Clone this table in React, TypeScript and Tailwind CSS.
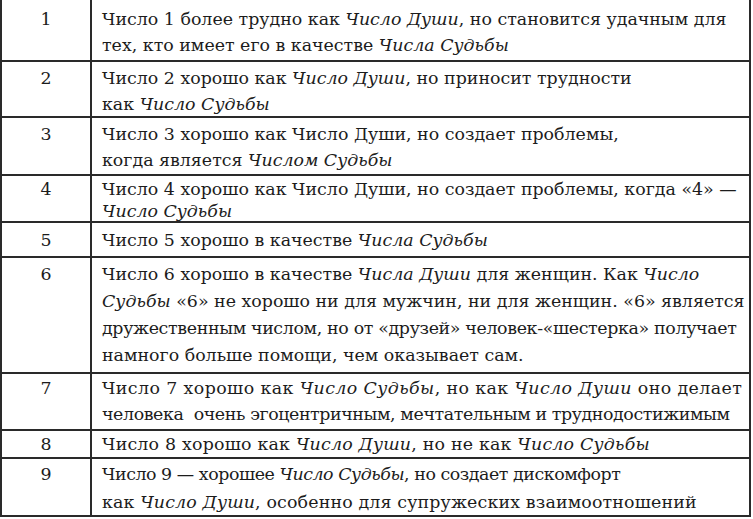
import React from "react";

type Row = { n: string; row: string; cell: string; lines: { c?: string; t: React.ReactNode }[] };

const I = ({ children }: { children: React.ReactNode }) => <i>{children}</i>;

const rows: Row[] = [
  { n: "1", row: "h-[62px]", cell: "pt-[6px] leading-[26px]", lines: [
    { t: <>Число 1 более трудно как <I>Число Души</I>, но становится удачным для</> },
    { t: <>тех, кто имеет его в качестве <I>Числа Судьбы</I></> },
  ] },
  { n: "2", row: "h-[56px]", cell: "pt-[3px] leading-[26px]", lines: [
    { t: <>Число 2 хорошо как <I>Число Души</I>, но приносит трудности</> },
    { t: <>как <I>Число Судьбы</I></> },
  ] },
  { n: "3", row: "h-[58px]", cell: "pt-[3px] leading-[26px]", lines: [
    { t: <>Число 3 хорошо как Число Души, но создает проблемы,</> },
    { t: <>когда является <I>Числом Судьбы</I></> },
  ] },
  { n: "4", row: "h-[47px]", cell: "pt-[2px] leading-[22px]", lines: [
    { t: <>Число 4 хорошо как Число Души, но создает проблемы, когда «4» —</> },
    { t: <><I>Число Судьбы</I></> },
  ] },
  { n: "5", row: "h-[35px]", cell: "pt-[4px] leading-[26px]", lines: [
    { t: <>Число 5 хорошо в качестве <I>Числа Судьбы</I></> },
  ] },
  { n: "6", row: "h-[116px]", cell: "pt-[3px] leading-[27px]", lines: [
    { t: <>Число 6 хорошо в качестве <I>Числа Души</I> для женщин. Как <I>Число</I></> },
    { t: <><I>Судьбы</I> «6» не хорошо ни для мужчин, ни для женщин. «6» является</> },
    { c: "tracking-[-0.35px]", t: <>дружественным числом, но от «друзей» человек-«шестерка» получает</> },
    { t: <>намного больше помощи, чем оказывает сам.</> },
  ] },
  { n: "7", row: "h-[57px]", cell: "pt-[1px] leading-[26px]", lines: [
    { c: "tracking-[0.4px]", t: <>Число 7 хорошо как <I>Число Судьбы</I>, но как <I>Число Души</I> оно делает</> },
    { c: "tracking-[-0.4px]", t: <>человека&nbsp; очень эгоцентричным, мечтательным и труднодостижимым</> },
  ] },
  { n: "8", row: "h-[28px]", cell: "pt-[0px] leading-[26px]", lines: [
    { c: "tracking-[0.2px]", t: <>Число 8 хорошо как <I>Число Души</I>, но не как <I>Число Судьбы</I></> },
  ] },
  { n: "9", row: "h-[58px]", cell: "pt-[1px] leading-[28px]", lines: [
    { c: "tracking-[-0.45px]", t: <>Число 9 — хорошее <I>Число Судьбы</I>, но создает дискомфорт</> },
    { c: "tracking-[0.15px]", t: <>как <I>Число Души</I>, особенно для супружеских взаимоотношений</> },
  ] },
];

export default function App() {
  return (
    <div className="w-[753px] h-[519px] bg-white overflow-hidden">
      <div className="w-[751px] border-l-2 border-r-2 border-[#2a2a2a] text-[#1c1c1c] font-['DejaVu_Serif',serif] text-[17.4px]">
        {rows.map((r) => (
          <div key={r.n} className={`flex border-b-2 border-[#2a2a2a] ${r.row}`}>
            <div className={`w-[90px] shrink-0 border-r-2 border-[#2a2a2a] text-center ${r.cell}`}>
              {r.n}
            </div>
            <div className={`pl-[10px] whitespace-nowrap ${r.cell}`}>
              {r.lines.map((l, i) => (
                <div key={i} className={l.c ?? ""}>
                  {l.t}
                </div>
              ))}
            </div>
          </div>
        ))}
      </div>
    </div>
  );
}
